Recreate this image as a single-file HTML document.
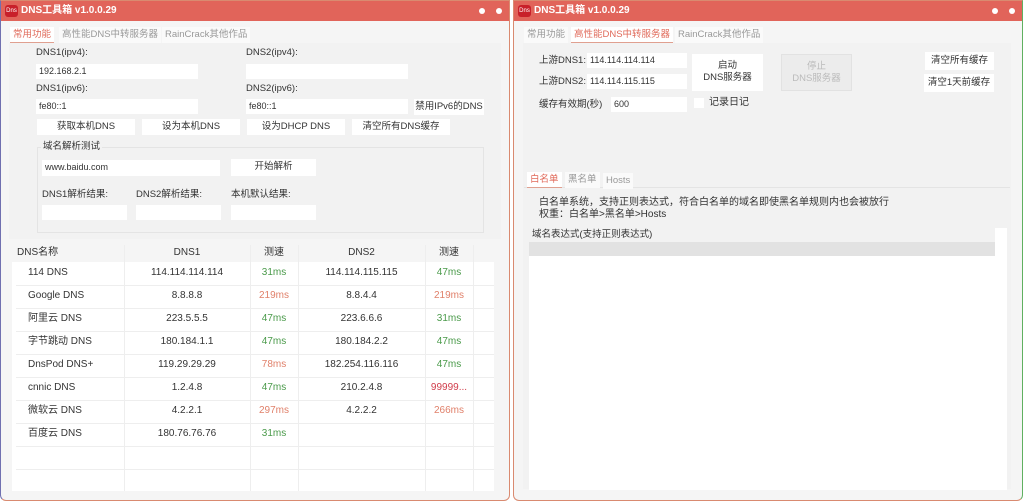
<!DOCTYPE html>
<html><head><meta charset="utf-8"><style>
*{box-sizing:border-box;margin:0;padding:0}
body{width:1024px;height:504px;background:#fff;position:relative;overflow:hidden;font-family:"Liberation Sans","Noto Sans CJK SC",sans-serif;font-size:9.5px;color:#333;line-height:12px}
div{white-space:nowrap}
.a{position:absolute}
.win{position:absolute;top:0;height:501px;background:#f5f5f5;border:1px solid #d98a70;border-radius:0 0 6px 6px;overflow:hidden}
.tb{position:absolute;left:0;top:0;right:0;height:20px;background:#e1645a}
.tt{position:absolute;left:20px;top:4px;color:#fff;font-weight:bold;font-size:10px}
.logo{position:absolute;left:4px;top:4px;width:13px;height:12px;background:#c8202a;border-radius:3px;color:#fff;font-size:6px;line-height:12px;text-align:center}
.dot{position:absolute;top:7px;width:6px;height:6px;border-radius:50%;background:#fff}
.tab{position:absolute;top:26px;height:16px;background:#fafafa;color:#999;font-size:9.5px;line-height:16px;padding:0 3px}
.tab.on{color:#e06a5a;border-bottom:1px solid #e0a090;background:#fff}
.in{position:absolute;background:#fff;height:15px;line-height:15px;padding-left:3px;font-size:9px}
.bt{position:absolute;background:#fff;height:16px;line-height:16px;text-align:center;font-size:9.5px}
.tbl .c{position:absolute;text-align:center;font-size:10px;line-height:12px;height:12px}
.g{color:#4a9a4a}.o{color:#e0806a}.r{color:#d03c4a}
</style></head><body>

<div class="win" style="left:0;width:510px;border-left-color:#7070b0">
<div class="tb"><div class="logo">Dns</div><div class="tt">DNS工具箱 v1.0.0.29</div><div class="dot" style="left:478px"></div><div class="dot" style="left:495px"></div></div>
<div class="tab on" style="left:9px">常用功能</div>
<div class="tab" style="left:58px">高性能DNS中转服务器</div>
<div class="tab" style="left:161px">RainCrack其他作品</div>
<div class="a" style="left:8px;top:42px;width:492px;height:196px;background:#f2f2f2"></div>
<div class="a" style="left:35px;top:46px">DNS1(ipv4):</div>
<div class="a" style="left:245px;top:46px">DNS2(ipv4):</div>
<div class="in" style="left:35px;top:63px;width:162px">192.168.2.1</div>
<div class="in" style="left:245px;top:63px;width:162px"></div>
<div class="a" style="left:35px;top:82px">DNS1(ipv6):</div>
<div class="a" style="left:245px;top:82px">DNS2(ipv6):</div>
<div class="in" style="left:35px;top:98px;width:162px">fe80::1</div>
<div class="in" style="left:245px;top:98px;width:162px">fe80::1</div>
<div class="bt" style="left:413px;top:98px;width:70px">禁用IPv6的DNS</div>
<div class="bt" style="left:36px;top:118px;width:98px">获取本机DNS</div>
<div class="bt" style="left:141px;top:118px;width:98px">设为本机DNS</div>
<div class="bt" style="left:246px;top:118px;width:98px">设为DHCP DNS</div>
<div class="bt" style="left:351px;top:118px;width:98px">清空所有DNS缓存</div>
<div class="a" style="left:36px;top:146px;width:447px;height:86px;border:1px solid #e4e4e4"></div>
<div class="a" style="left:40px;top:140px;background:#f2f2f2;padding:0 2px">域名解析测试</div>
<div class="in" style="left:41px;top:159px;width:178px;height:16px">www.baidu.com</div>
<div class="bt" style="left:230px;top:158px;width:85px;height:17px">开始解析</div>
<div class="a" style="left:41px;top:188px">DNS1解析结果:</div>
<div class="a" style="left:135px;top:188px">DNS2解析结果:</div>
<div class="a" style="left:230px;top:188px">本机默认结果:</div>
<div class="in" style="left:41px;top:204px;width:85px"></div>
<div class="in" style="left:135px;top:204px;width:85px"></div>
<div class="in" style="left:230px;top:204px;width:85px"></div>

<div class="a" style="left:11px;top:261px;width:482px;height:229px;background:#fff"></div>
<svg class="a" style="left:0;top:0" width="510" height="504">
<g stroke="#eee" stroke-width="1">
<line x1="123.5" y1="244" x2="123.5" y2="490"/><line x1="249.5" y1="244" x2="249.5" y2="490"/><line x1="297.5" y1="244" x2="297.5" y2="490"/><line x1="424.5" y1="244" x2="424.5" y2="490"/><line x1="472.5" y1="244" x2="472.5" y2="490"/>
<line x1="15" y1="284.5" x2="493" y2="284.5"/><line x1="15" y1="307.5" x2="493" y2="307.5"/><line x1="15" y1="330.5" x2="493" y2="330.5"/><line x1="15" y1="353.5" x2="493" y2="353.5"/><line x1="15" y1="376.5" x2="493" y2="376.5"/><line x1="15" y1="399.5" x2="493" y2="399.5"/><line x1="15" y1="422.5" x2="493" y2="422.5"/><line x1="15" y1="445.5" x2="493" y2="445.5"/><line x1="15" y1="468.5" x2="493" y2="468.5"/>
</g></svg>
<div class="tbl">
<div class="c" style="left:16px;top:246px">DNS名称</div>
<div class="c" style="left:123px;top:246px;width:126px">DNS1</div>
<div class="c" style="left:249px;top:246px;width:48px">测速</div>
<div class="c" style="left:297px;top:246px;width:127px">DNS2</div>
<div class="c" style="left:424px;top:246px;width:48px">测速</div>
<div class="c" style="left:27px;top:266px">114 DNS</div><div class="c" style="left:123px;top:266px;width:126px">114.114.114.114</div><div class="c g" style="left:249px;top:266px;width:48px">31ms</div><div class="c" style="left:297px;top:266px;width:127px">114.114.115.115</div><div class="c g" style="left:424px;top:266px;width:48px">47ms</div>
<div class="c" style="left:27px;top:289px">Google DNS</div><div class="c" style="left:123px;top:289px;width:126px">8.8.8.8</div><div class="c o" style="left:249px;top:289px;width:48px">219ms</div><div class="c" style="left:297px;top:289px;width:127px">8.8.4.4</div><div class="c o" style="left:424px;top:289px;width:48px">219ms</div>
<div class="c" style="left:27px;top:312px">阿里云 DNS</div><div class="c" style="left:123px;top:312px;width:126px">223.5.5.5</div><div class="c g" style="left:249px;top:312px;width:48px">47ms</div><div class="c" style="left:297px;top:312px;width:127px">223.6.6.6</div><div class="c g" style="left:424px;top:312px;width:48px">31ms</div>
<div class="c" style="left:27px;top:335px">字节跳动 DNS</div><div class="c" style="left:123px;top:335px;width:126px">180.184.1.1</div><div class="c g" style="left:249px;top:335px;width:48px">47ms</div><div class="c" style="left:297px;top:335px;width:127px">180.184.2.2</div><div class="c g" style="left:424px;top:335px;width:48px">47ms</div>
<div class="c" style="left:27px;top:358px">DnsPod DNS+</div><div class="c" style="left:123px;top:358px;width:126px">119.29.29.29</div><div class="c o" style="left:249px;top:358px;width:48px">78ms</div><div class="c" style="left:297px;top:358px;width:127px">182.254.116.116</div><div class="c g" style="left:424px;top:358px;width:48px">47ms</div>
<div class="c" style="left:27px;top:381px">cnnic DNS</div><div class="c" style="left:123px;top:381px;width:126px">1.2.4.8</div><div class="c g" style="left:249px;top:381px;width:48px">47ms</div><div class="c" style="left:297px;top:381px;width:127px">210.2.4.8</div><div class="c r" style="left:424px;top:381px;width:48px">99999...</div>
<div class="c" style="left:27px;top:404px">微软云 DNS</div><div class="c" style="left:123px;top:404px;width:126px">4.2.2.1</div><div class="c o" style="left:249px;top:404px;width:48px">297ms</div><div class="c" style="left:297px;top:404px;width:127px">4.2.2.2</div><div class="c o" style="left:424px;top:404px;width:48px">266ms</div>
<div class="c" style="left:27px;top:427px">百度云 DNS</div><div class="c" style="left:123px;top:427px;width:126px">180.76.76.76</div><div class="c g" style="left:249px;top:427px;width:48px">31ms</div>
</div>
</div>

<div class="win" style="left:513px;width:510px;border-right-color:#60b060">
<div class="tb"><div class="logo">Dns</div><div class="tt">DNS工具箱 v1.0.0.29</div><div class="dot" style="left:478px"></div><div class="dot" style="left:495px"></div></div>
<div class="tab" style="left:10px">常用功能</div>
<div class="tab on" style="left:57px">高性能DNS中转服务器</div>
<div class="tab" style="left:161px">RainCrack其他作品</div>
<div class="a" style="left:9px;top:42px;width:488px;height:446px;background:#f2f2f2"></div>
<div class="a" style="left:25px;top:54px">上游DNS1:</div>
<div class="a" style="left:25px;top:75px">上游DNS2:</div>
<div class="a" style="left:25px;top:98px">缓存有效期(秒)</div>
<div class="in" style="left:73px;top:52px;width:100px">114.114.114.114</div>
<div class="in" style="left:73px;top:73px;width:100px">114.114.115.115</div>
<div class="in" style="left:97px;top:96px;width:76px">600</div>
<div class="bt" style="left:178px;top:53px;width:71px;height:37px;line-height:12px;padding-top:6px;white-space:normal">启动<br>DNS服务器</div>
<div class="bt" style="left:267px;top:53px;width:71px;height:37px;line-height:12px;padding-top:6px;background:#ececec;color:#bbb;border:1px solid #e2e2e2;white-space:normal">停止<br>DNS服务器</div>
<div class="a" style="left:180px;top:97px;width:10px;height:10px;background:#fff"></div>
<div class="a" style="left:195px;top:96px;font-size:10px">记录日记</div>
<div class="bt" style="left:411px;top:51px;width:69px;height:18px;line-height:18px">清空所有缓存</div>
<div class="bt" style="left:410px;top:73px;width:70px;height:18px;line-height:18px">清空1天前缓存</div>
<div class="a" style="left:10px;top:186px;width:486px;border-top:1px solid #e4e4e4"></div>
<div class="tab on" style="left:13px;top:171px;background:#fff">白名单</div>
<div class="tab" style="left:51px;top:171px">黑名单</div>
<div class="tab" style="left:89px;top:172px">Hosts</div>
<div class="a" style="left:25px;top:196px;font-size:10px;line-height:12px;white-space:normal">白名单系统，支持正则表达式，符合白名单的域名即使黑名单规则内也会被放行<br>权重：白名单&gt;黑名单&gt;Hosts</div>
<div class="a" style="left:15px;top:227px;width:478px;height:262px;background:#fff"></div>
<div class="a" style="left:15px;top:227px;width:466px;height:14px;background:#f2f2f2;padding-left:3px;line-height:14px">域名表达式(支持正则表达式)</div>
<div class="a" style="left:15px;top:241px;width:466px;height:14px;background:#e2e2e2"></div>
</div>
</body></html>
